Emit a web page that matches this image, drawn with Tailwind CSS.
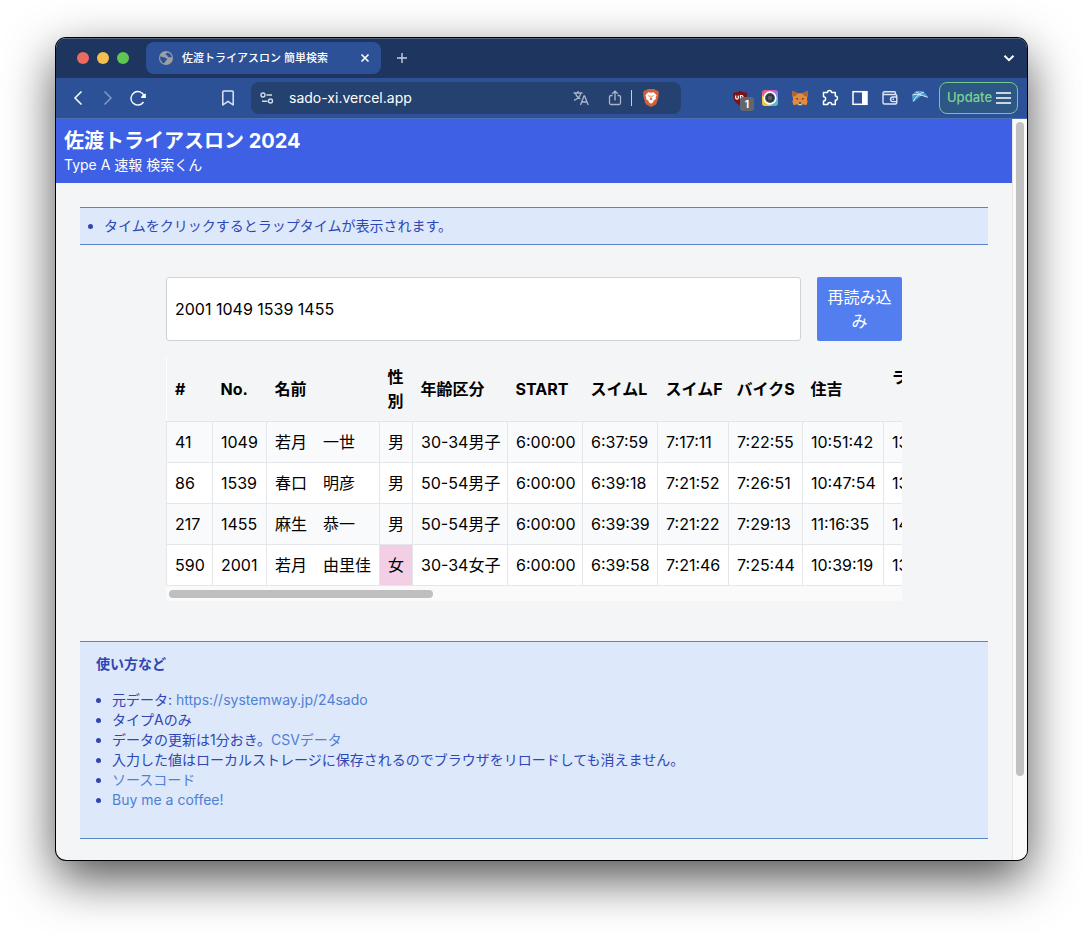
<!DOCTYPE html>
<html lang="ja">
<head>
  <meta charset="UTF-8">
  <meta name="viewport" content="width=device-width, initial-scale=1.0">
  <title>佐渡トライアスロン 簡単検索</title>
  <script src="https://cdn.jsdelivr.net/npm/@tailwindcss/browser@4"></script>
</head>
<body class="bg-white px-14 pt-[38px] pb-[74px] font-['Inter','Noto_Sans_CJK_JP',sans-serif] text-black">
  <div class="rounded-[10px] overflow-hidden bg-[#f3f5f7] shadow-[0_0_0_1px_#000,0_18px_50px_0_rgba(0,0,0,0.7)]">

    <!-- Tab strip -->
    <div class="flex h-10 items-center bg-[#1d355f] pl-[21px] pr-[11px] shadow-[inset_0_1px_0_#56657f]">
      <div class="flex gap-2">
        <span class="size-3 rounded-full bg-[#ec6b60]"></span>
        <span class="size-3 rounded-full bg-[#f5bf4f]"></span>
        <span class="size-3 rounded-full bg-[#61c554]"></span>
      </div>
      <div class="ml-[17px] flex h-8 w-[235px] items-center rounded-lg bg-[#2c5196] pl-3 pr-2.5 text-white">
        <svg class="size-4 shrink-0" viewBox="0 0 16 16">
          <circle cx="8" cy="8" r="7" fill="#9aa0a6"/>
          <path d="M2.200 6.500c1.500 0 2.600.8 3.800.8 1.500 0 1.500 1.200 2.700 1.300 1 .2.600 1.300-.2 1.500-1 .3-.8 1.200-1.200 2-.3.700-1.200.5-1.300 1.300C3.500 12.400 1.700 9.500 2.200 6.500zM9.500 2.400c-.2 1-2 .8-2 1.900 0 1 1.400.7 2 1.400.5.700 0 1.300 1 1.500 1.200.2 1.700-.5 3.300.4C13.700 5 12 3 9.500 2.400z" fill="#2c5196"/>
        </svg>
        <span class="ml-2 flex-1 whitespace-nowrap text-[11px] font-medium">佐渡トライアスロン 簡単検索</span>
        <button aria-label="タブを閉じる">
          <svg class="size-3" viewBox="0 0 12 12" fill="none" stroke="currentColor" stroke-width="1.600"><path d="M2.500 2.500l7 7M9.500 2.500l-7 7"/></svg>
        </button>
      </div>
      <button class="ml-3.5 text-[#c7d1e2]" aria-label="新しいタブ">
        <svg class="size-3.5" viewBox="0 0 14 14" fill="none" stroke="currentColor" stroke-width="1.400"><path d="M7 2v10M2 7h10"/></svg>
      </button>
      <button class="ml-auto text-white" aria-label="タブを検索">
        <svg class="size-3.5" viewBox="0 0 14 14" fill="none" stroke="currentColor" stroke-width="2"><path d="M2.500 4.800L7 9.200l4.500-4.400"/></svg>
      </button>
    </div>

    <!-- Toolbar -->
    <div class="flex h-[41px] items-center border-b border-[#4a6fb5] bg-[#2c5196] pl-[7px] pr-[9px] text-white">
      <button class="flex w-[30px] justify-center" aria-label="戻る">
        <svg class="size-4" viewBox="0 0 16 16" fill="none" stroke="currentColor" stroke-width="1.500"><path d="M11.500 1.500L5 8l6.500 6.500"/></svg>
      </button>
      <button class="flex w-[30px] justify-center text-[#8099c6]" aria-label="進む">
        <svg class="size-4" viewBox="0 0 16 16" fill="none" stroke="currentColor" stroke-width="1.500"><path d="M4.500 1.500L11 8l-6.500 6.500"/></svg>
      </button>
      <button class="flex w-[30px] justify-center" aria-label="再読み込み">
        <svg class="size-4" viewBox="0 0 16 16" fill="none" stroke="currentColor" stroke-width="1.400"><path d="M13.500 12A6.800 6.800 0 1 1 14.200 6"/><path d="M15.800 3.500v4.600h-4.600q-.4-1.200.6-2.200 1.500-1.900 4-2.400z" fill="currentColor" stroke="none"/></svg>
      </button>
      <button class="ml-[60px] flex w-[30px] justify-center" aria-label="ブックマーク">
        <svg class="size-4" viewBox="0 0 16 16" fill="none" stroke="#dfe6f3" stroke-width="1.500" stroke-linejoin="round"><path d="M2.800 2q0-1 1-1h8.400q1 0 1 1v13L8 11.300 2.800 15z"/></svg>
      </button>
      <div class="ml-2 mr-11 flex h-8 min-w-0 flex-1 items-center rounded-lg bg-[#25416f] pl-2 pr-[22px]">
        <svg class="size-4 shrink-0" viewBox="0 0 16 16" fill="none" stroke="#d3dae6" stroke-width="1.400"><circle cx="4" cy="5" r="2"/><path d="M7.500 5H13M3 11.200h5.500"/><circle cx="11.500" cy="11" r="2"/></svg>
        <input class="ml-3.5 min-w-0 flex-1 bg-transparent text-sm text-white outline-none" type="text" value="sado-xi.vercel.app" aria-label="アドレス">
        <button aria-label="翻訳">
          <svg class="size-4" viewBox="0 0 16 16" fill="none" stroke="#a9b6cd" stroke-width="1.300"><path d="M.5 3h9M5 1v2M7.800 3C7.300 6 4.500 9 1 10.300M2.400 3c.6 2.400 2.800 5 5 6M7.500 15l3.500-9h.6l3.600 9M8.700 12h5.300"/></svg>
        </button>
        <button class="ml-[18px]" aria-label="共有">
          <svg class="size-4" viewBox="0 0 16 16" fill="none" stroke="#a9b6cd" stroke-width="1.300"><path d="M5.500 5.500H4q-1.500 0-1.500 1.500v6q0 1.500 1.500 1.500h8q1.500 0 1.500-1.500V7q0-1.500-1.500-1.500h-1.500M8 10.500V1.200M5.200 3.800L8 1.100l2.800 2.700"/></svg>
        </button>
        <span class="ml-2 mr-[11px] h-4 w-px bg-[#c5cedd]"></span>
        <button aria-label="Brave Shields">
          <svg class="h-[18px] w-4" viewBox="0 0 16 18">
            <path d="M4.500 0h7L13 1.500l1.500-.2L16 3.800l-.6 1.500.4 1.500-2 7Q13.500 15 12.500 15.700L8 18l-4.500-2.300Q2.500 15 2.200 13.800l-2-7 .4-1.500L0 3.800l1.500-2.500 1.500.2z" fill="#d4603a"/>
            <path d="M5.300 3.200L8 3.700l2.700-.5 2.900 3-.9 2.300.2 1.600-2.700 1.800.2 1.100L8 14.800 5.600 13l.2-1.100-2.700-1.800.2-1.600-.9-2.300z" fill="#fff"/>
            <path d="M4.500 6.200l2.300.5-.4 1.200zM11.500 6.200l-2.300.5.4 1.200zM7.600 6.500h.8l.2 2.800 1.200.7L8 11.200 6.200 10l1.200-.7z" fill="#d4603a"/>
          </svg>
        </button>
      </div>

      <button class="relative flex w-[30px] justify-center" aria-label="uBlock Origin">
        <svg class="size-4" viewBox="0 0 16 16"><path d="M8 .5C6 2 4 2.500 1 2.500 1 9 2 12.500 8 15.500 14 12.500 15 9 15 2.500 12 2.500 10 2 8 .5z" fill="#7c1216"/><path d="M3.700 5.500v2.300q0 1.400 1.300 1.400t1.300-1.400V5.500M8.500 9.500v-4h1q1.500 0 1.500 1.300T9.500 8h-1" fill="none" stroke="#fff" stroke-width="1.200"/></svg>
        <span class="absolute left-[15px] top-[7px] flex h-3.5 w-3.5 items-center justify-center rounded-[3px] bg-[#63676b] text-[10px] font-bold">1</span>
      </button>
      <button class="flex w-[30px] justify-center" aria-label="カメラ">
        <svg class="size-4" viewBox="0 0 16 16">
          <defs><linearGradient id="cam" x1="0" y1="0" x2="1" y2="1"><stop offset="0" stop-color="#ee6b4f"/><stop offset=".4" stop-color="#d45ad6"/><stop offset=".7" stop-color="#5b9df5"/><stop offset="1" stop-color="#57d38a"/></linearGradient></defs>
          <rect width="16" height="16" rx="3" fill="url(#cam)"/><path d="M0 5v8q0 3 3 3h6z" fill="#f5c542"/>
          <circle cx="8" cy="8" r="5.800" fill="#3f4a58" stroke="#fff" stroke-width="1.700"/><circle cx="8" cy="8" r="3" fill="#535c69" stroke="#252e39" stroke-width="1.200"/>
        </svg>
      </button>
      <button class="flex w-[30px] justify-center" aria-label="MetaMask">
        <svg class="size-4" viewBox="0 0 16 16"><path d="M.6.8l5.200 2.400h4.400L15.400.8l.4 4-.9 4.200.7 3-1.300 3.200-3.500-1L9.300 15.500H6.700L5.200 14.200l-3.500 1L.4 12l.7-3L.2 4.800z" fill="#e58a3a"/><path d="M.6.8l5.200 2.400-2 2.600L1.100 6.500.2 4.800zM15.400.8l-5.200 2.400 2 2.600 2.700.7.900-1.700z" fill="#b9622a"/><path d="M3.500 8.200l2.700.4-.3 1.500zM12.500 8.200l-2.700.4.300 1.500z" fill="#303846"/><path d="M6 12h4l-.5 3H6.500z" fill="#d9c7b5"/><path d="M6.700 12.300h2.600v1.500H6.700z" fill="#26303c"/></svg>
      </button>
      <button class="flex w-[30px] justify-center" aria-label="拡張機能">
        <svg class="size-[18px]" viewBox="0 0 18 18" fill="none" stroke="currentColor" stroke-width="1.500" stroke-linejoin="round"><path d="M2.500 3.500H6.500A2 2 0 0 1 10.500 3.500h3.800V7a2 2 0 0 1 0 4.300v4.200H10.800a2 2 0 0 0-4 0H2.500V12a2.100 2.100 0 0 0 0-4.300V3.500z"/></svg>
      </button>
      <button class="flex w-[30px] justify-center" aria-label="サイドバー">
        <svg class="size-4" viewBox="0 0 16 16"><rect x="1" y="1.700" width="14" height="12.600" fill="none" stroke="#fff" stroke-width="1.500"/><path d="M10 1.500h5v13h-5z" fill="#fff"/></svg>
      </button>
      <button class="flex w-[30px] justify-center" aria-label="ウォレット">
        <svg class="size-4" viewBox="0 0 16 16" fill="none" stroke="#dfe6f3" stroke-width="1.400"><path d="M13.500 4.500V3q0-1.200-1.200-1.200H2.500Q1 1.800 1 3.200v9.300q0 1.500 1.500 1.500h10.800q1.500 0 1.500-1.500V6q0-1.500-1.500-1.500H2.500Q1 4.500 1 3.200"/><path d="M15 7h-4.200a2.300 2.300 0 0 0 0 4.600H15"/><path d="M10.500 9.300h1.500"/></svg>
      </button>
      <button class="flex w-[30px] justify-center" aria-label="拡張">
        <svg class="size-4" viewBox="0 0 16 16"><path d="M.3 5C3-.5 12-1.300 15.800 7.300L9.500 5.500 1.500 12Q-.5 8.500.3 5z" fill="#4d9ad2"/><path d="M.3 5C4 3.800 8 4.500 15.800 7.300M1.200 11.500C3 7.500 7 3.500 12 2M4 1.800q3 .8 5 4" fill="none" stroke="#d4ecfa"/></svg>
      </button>
      <button class="ml-1 flex h-8 w-[79px] items-center justify-between rounded-lg border border-[#74c98c] bg-[#2d5785] pl-[7px] pr-1.5 text-[13px] font-medium text-[#7bd392]">
        Update
        <svg class="size-4" viewBox="0 0 16 16" stroke="#fff" stroke-width="1.400"><path d="M1 3h15M1 8h15M1 13h15"/></svg>
      </button>
    </div>

    <!-- Page -->
    <div class="flex">
      <div class="min-w-0 flex-1 pb-[21px]">
        <header class="bg-[#3d60e5] p-2 text-white">
          <h1 class="text-xl leading-7 font-bold">佐渡トライアスロン 2024</h1>
          <p class="text-sm">Type A 速報 検索くん</p>
        </header>

        <div class="m-6 border-y border-[#5b86c5] bg-[#dde8fa] p-2 text-sm text-[#2f46b5]">
          <ul class="ml-4 list-disc">
            <li>タイムをクリックするとラップタイムが表示されます。</li>
          </ul>
        </div>

        <main class="mx-auto mt-8 max-w-[736px]">
          <form class="mb-4 flex gap-4">
            <input class="min-w-0 flex-1 rounded-[3px] border border-[#cfd3d8] bg-white p-2" type="text" value="2001 1049 1539 1455" aria-label="ゼッケン番号">
            <button class="w-[85px] rounded-[2px] bg-[#527ef0] p-2 text-white" type="button">再読み込み</button>
          </form>

          <div class="overflow-hidden">
            <table class="w-[900px] table-fixed border-collapse text-left whitespace-nowrap">
              <colgroup>
                <col class="w-[46px]"><col class="w-[54px]"><col class="w-[113px]"><col class="w-[33px]"><col class="w-[95px]">
                <col class="w-[75px]"><col class="w-[75px]"><col class="w-[71px]"><col class="w-[74px]"><col class="w-[81px]"><col>
              </colgroup>
              <thead>
                <tr class="border-l border-l-white [&>th]:p-2">
                  <th>#</th><th>No.</th><th>名前</th><th class="whitespace-normal">性別</th><th>年齢区分</th>
                  <th>START</th><th>スイムL</th><th>スイムF</th><th>バイクS</th><th>住吉</th><th class="align-top">ラ</th>
                </tr>
              </thead>
              <tbody id="results"></tbody>
            </table>
            <div class="bg-[#fafafa] px-[3px] pt-1 pb-[3px]">
              <div class="h-2 w-[264px] rounded-full bg-[#bfbfbf]"></div>
            </div>
          </div>
        </main>

        <section class="mx-6 mt-10 border-y border-[#5b86c5] bg-[#dde8fa] px-4 py-3 text-sm text-[#2f46b5]">
          <h2 class="font-bold">使い方など</h2>
          <ul class="my-4 ml-4 list-disc [&_a]:text-[#4f80d6]">
            <li>元データ: <a href="https://systemway.jp/24sado">https://systemway.jp/24sado</a></li>
            <li>タイプAのみ</li>
            <li>データの更新は1分おき。<a href="#">CSVデータ</a></li>
            <li>入力した値はローカルストレージに保存されるのでブラウザをリロードしても消えません。</li>
            <li><a href="#">ソースコード</a></li>
            <li><a href="#">Buy me a coffee!</a></li>
          </ul>
        </section>
      </div>

      <!-- Scrollbar -->
      <div class="w-[15px] border-l border-[#e6e6e6] bg-[#fafafa] px-[3px] pt-[3px]">
        <div class="h-[654px] w-2 rounded-full bg-[#c1c1c1]"></div>
      </div>
    </div>
  </div>

  <script>
    const results = [
      ['41', '1049', '若月　一世', '男', '30-34男子', '6:00:00', '6:37:59', '7:17:11', '7:22:55', '10:51:42', '13:'],
      ['86', '1539', '春口　明彦', '男', '50-54男子', '6:00:00', '6:39:18', '7:21:52', '7:26:51', '10:47:54', '13:'],
      ['217', '1455', '麻生　恭一', '男', '50-54男子', '6:00:00', '6:39:39', '7:21:22', '7:29:13', '11:16:35', '14:'],
      ['590', '2001', '若月　由里佳', '女', '30-34女子', '6:00:00', '6:39:58', '7:21:46', '7:25:44', '10:39:19', '13:'],
    ];

    document.getElementById('results').innerHTML = results.map(row => `
      <tr class="bg-white odd:bg-[#f9fafc]">
        ${row.map(v => `<td class="border border-[#e4e6ea] p-2 ${v === '女' ? 'bg-[#f3cfe6]' : ''}">${v}</td>`).join('')}
      </tr>`).join('');
  </script>
</body>
</html>
